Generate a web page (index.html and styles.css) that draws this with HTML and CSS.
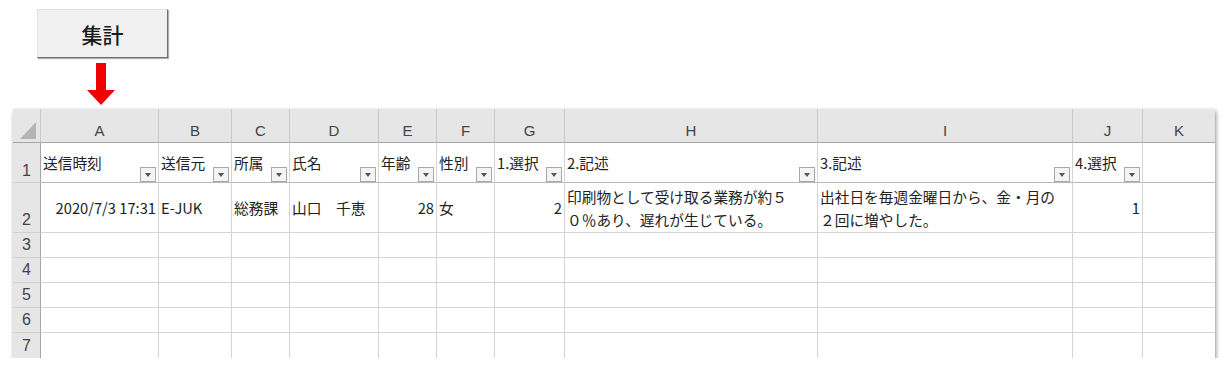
FILE: index.html
```html
<!DOCTYPE html>
<html lang="ja">

<head>
    <meta charset="UTF-8">
    <meta name="viewport" content="width=device-width, initial-scale=1.0">
    <title>集計</title>
    <link rel="stylesheet" href="styles.css">
</head>

<body>

    <div class="toolbar">
        <button class="btn-shukei">集計</button>
    </div>

    <div class="arrow">
        <svg width="28" height="43" viewBox="0 0 28 43">
            <polygon points="9,0 19,0 19,27 28,27 14,42 0,27 9,27" fill="#f00000" />
        </svg>
    </div>

    <div class="sheet">
        <table class="grid">
            <colgroup>
                <col style="width:28px">
                <col style="width:118px">
                <col style="width:73px">
                <col style="width:58px">
                <col style="width:89px">
                <col style="width:58px">
                <col style="width:58px">
                <col style="width:70px">
                <col style="width:253px">
                <col style="width:255px">
                <col style="width:70px">
                <col style="width:72px">
            </colgroup>
            <thead>
                <tr class="col-head">
                    <th class="corner"><span class="corner-tri"></span></th>
                    <th>A</th>
                    <th>B</th>
                    <th>C</th>
                    <th>D</th>
                    <th>E</th>
                    <th>F</th>
                    <th>G</th>
                    <th>H</th>
                    <th>I</th>
                    <th>J</th>
                    <th>K</th>
                </tr>
            </thead>
            <tbody>
                <tr class="row-title">
                    <td class="rn">1</td>
                    <td>送信時刻<span class="filter"></span></td>
                    <td>送信元<span class="filter"></span></td>
                    <td>所属<span class="filter"></span></td>
                    <td>氏名<span class="filter"></span></td>
                    <td>年齢<span class="filter"></span></td>
                    <td>性別<span class="filter"></span></td>
                    <td>1.選択<span class="filter"></span></td>
                    <td>2.記述<span class="filter"></span></td>
                    <td>3.記述<span class="filter"></span></td>
                    <td>4.選択<span class="filter"></span></td>
                    <td></td>
                </tr>
                <tr class="row-data">
                    <td class="rn">2</td>
                    <td class="num">2020/7/3 17:31</td>
                    <td>E-JUK</td>
                    <td>総務課</td>
                    <td>山口　千恵</td>
                    <td class="num">28</td>
                    <td>女</td>
                    <td class="num">2</td>
                    <td class="wrap">印刷物として受け取る業務が約５<br>０％あり、遅れが生じている。</td>
                    <td class="wrap">出社日を毎週金曜日から、金・月の<br>２回に増やした。</td>
                    <td class="num">1</td>
                    <td></td>
                </tr>
                <tr class="row-empty">
                    <td class="rn">3</td>
                    <td></td><td></td><td></td><td></td><td></td><td></td><td></td><td></td><td></td><td></td><td></td>
                </tr>
                <tr class="row-empty">
                    <td class="rn">4</td>
                    <td></td><td></td><td></td><td></td><td></td><td></td><td></td><td></td><td></td><td></td><td></td>
                </tr>
                <tr class="row-empty">
                    <td class="rn">5</td>
                    <td></td><td></td><td></td><td></td><td></td><td></td><td></td><td></td><td></td><td></td><td></td>
                </tr>
                <tr class="row-empty">
                    <td class="rn">6</td>
                    <td></td><td></td><td></td><td></td><td></td><td></td><td></td><td></td><td></td><td></td><td></td>
                </tr>
                <tr class="row-empty">
                    <td class="rn">7</td>
                    <td></td><td></td><td></td><td></td><td></td><td></td><td></td><td></td><td></td><td></td><td></td>
                </tr>
            </tbody>
        </table>
    </div>

</body>

</html>
```

FILE: styles.css
```css
body {
    margin: 0;
    background-color: #ffffff;
    font-family: "Noto Sans CJK JP", "Liberation Sans", sans-serif;
    color: #222;
}

.toolbar {
    padding: 9px 0 0 37px;
    height: 59px;
    box-sizing: border-box;
}

.btn-shukei {
    width: 131px;
    height: 49px;
    background-color: #f0f0f0;
    border: 1px solid #e2e2e2;
    border-right-color: #6f6f6f;
    border-bottom-color: #6f6f6f;
    box-shadow: 1px 1px 1px #b0b0b0;
    font-family: "Noto Sans CJK JP", sans-serif;
    font-size: 21px;
    font-weight: 500;
    color: #1a1a1a;
    padding: 0;
    margin: 0;
    display: block;
}

.arrow {
    padding: 4px 0 0 87px;
    height: 46px;
    box-sizing: border-box;
}

.arrow svg {
    display: block;
}

.sheet {
    margin: 4px 0 0 13px;
    width: 1202px;
    box-shadow: 1px 2px 4px rgba(0, 0, 0, 0.45);
}

.grid {
    border-collapse: separate;
    border-spacing: 0;
    table-layout: fixed;
    width: 1202px;
    font-size: 14.7px;
}

.grid th,
.grid td {
    box-sizing: border-box;
    border-right: 1px solid #d4d4d4;
    border-bottom: 1px solid #d4d4d4;
    padding: 0 2px;
    white-space: nowrap;
    overflow: hidden;
}

.col-head th {
    height: 34px;
    background-color: #e6e6e6;
    font-family: "Liberation Sans", sans-serif;
    font-weight: normal;
    font-size: 15px;
    color: #444;
    text-align: center;
    vertical-align: middle;
    padding-top: 9px;
    border-right-color: #c8c8c8;
    border-bottom: 1px solid #a5a5a5;
}

.col-head th:last-child {
    border-right: none;
}

.corner {
    position: relative;
}

.corner-tri {
    position: absolute;
    right: 4px;
    bottom: 3px;
    width: 0;
    height: 0;
    border-left: 16px solid transparent;
    border-bottom: 17px solid #b4b4b4;
}

.grid td.rn {
    background-color: #e6e6e6;
    border-right: 1px solid #a5a5a5;
    border-bottom-color: #d0d0d0;
    font-family: "Liberation Sans", sans-serif;
    font-size: 16px;
    color: #444;
    text-align: center;
    padding: 0;
}

.grid td:last-child {
    border-right: none;
}

.row-title td {
    height: 40px;
    position: relative;
    vertical-align: middle;
    border-bottom-color: #b8b8b8;
}

.row-title td.rn {
    vertical-align: bottom;
    padding-bottom: 2px;
    border-bottom-color: #d0d0d0;
}

.filter {
    position: absolute;
    right: 2px;
    bottom: 0;
    width: 16px;
    height: 15px;
    box-sizing: border-box;
    background-color: #f4f4f4;
    border: 1px solid #a8a8a8;
}

.filter::after {
    content: "";
    position: absolute;
    left: 4px;
    top: 5px;
    border-left: 3.5px solid transparent;
    border-right: 3.5px solid transparent;
    border-top: 4px solid #555;
}

.row-data td {
    height: 50px;
    vertical-align: middle;
    line-height: 23px;
}

.row-data td.rn {
    vertical-align: bottom;
    padding-bottom: 2px;
    line-height: 20px;
}

.grid td.num {
    text-align: right;
}

.grid td.wrap {
    white-space: nowrap;
    padding-left: 2px;
}

.row-empty td {
    height: 25px;
}

.grid .row-empty:last-child td {
    border-bottom: none;
}
```
